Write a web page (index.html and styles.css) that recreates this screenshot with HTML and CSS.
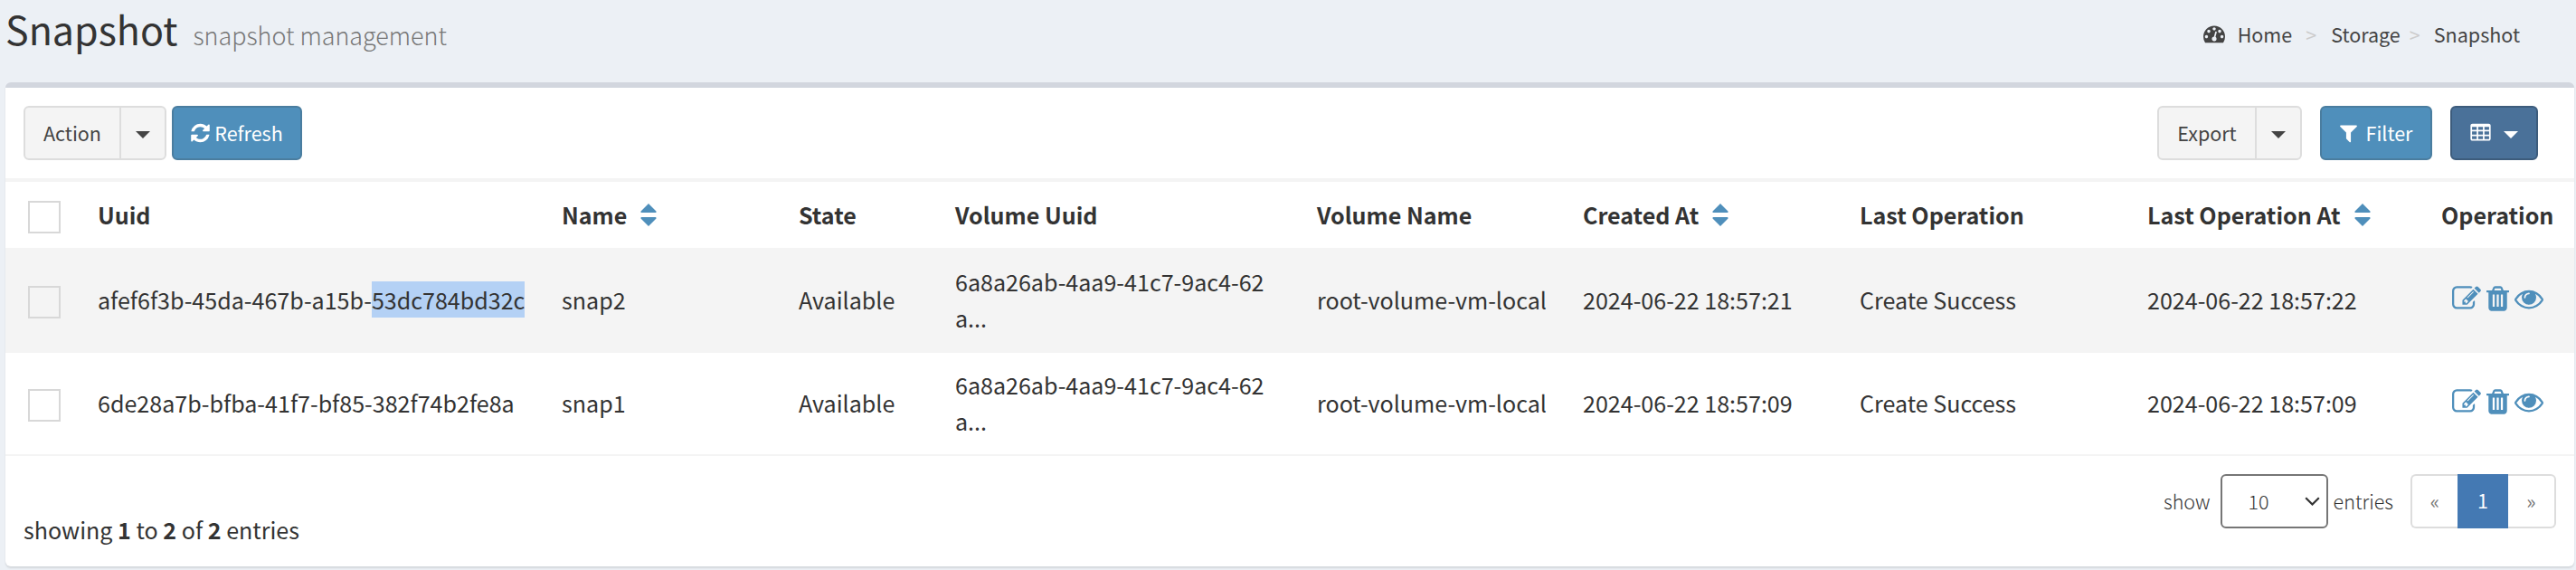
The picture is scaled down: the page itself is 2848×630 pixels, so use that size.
FILE: index.html
```html
<!DOCTYPE html>
<html lang="en">
<head>
<meta charset="utf-8">
<title>Snapshot</title>
<link rel="stylesheet" href="styles.css">
</head>
<body>
<svg class="sprite" aria-hidden="true">
  <symbol id="i-edit" viewBox="0 0 1792 1792"><path d="M888 1184l116-116-152-152-116 116v56h96v96h56zm440-720q-16-16-33 1l-350 350q-17 17-1 33t33-1l350-350q17-17 1-33zm80 594v190q0 119-84.500 203.500t-203.500 84.500h-832q-119 0-203.500-84.500t-84.500-203.500v-832q0-119 84.500-203.500t203.500-84.500h832q63 0 117 25 15 7 18 23 3 17-9 29l-49 49q-14 14-32 8-23-6-45-6h-832q-66 0-113 47t-47 113v832q0 66 47 113t113 47h832q66 0 113-47t47-113v-126q0-13 9-22l64-64q15-15 35-7t20 29zm-96-738l288 288-672 672h-288v-288zm444 132l-92 92-288-288 92-92q28-28 68-28t68 28l152 152q28 28 28 68t-28 68z"/></symbol>
  <symbol id="i-trash" viewBox="192 0 1408 1792"><path d="M704 1376v-704q0-14-9-23t-23-9h-64q-14 0-23 9t-9 23v704q0 14 9 23t23 9h64q14 0 23-9t9-23zm256 0v-704q0-14-9-23t-23-9h-64q-14 0-23 9t-9 23v704q0 14 9 23t23 9h64q14 0 23-9t9-23zm256 0v-704q0-14-9-23t-23-9h-64q-14 0-23 9t-9 23v704q0 14 9 23t23 9h64q14 0 23-9t9-23zm-544-992h448l-48-117q-7-9-17-11h-317q-10 2-17 11zm928 32v64q0 14-9 23t-23 9h-96v948q0 83-47 143.500t-113 60.500h-832q-66 0-113-58.500t-47-141.500v-952h-96q-14 0-23-9t-9-23v-64q0-14 9-23t23-9h309l70-167q15-37 54-63t79-26h320q40 0 79 26t54 63l70 167h309q14 0 23 9t9 23z"/></symbol>
  <symbol id="i-eye" viewBox="0 0 1792 1792"><path d="M1664 960q-152-236-381-353 61 104 61 225 0 185-131.500 316.500t-316.500 131.500-316.500-131.500-131.500-316.500q0-121 61-225-229 117-381 353 133 205 333.500 326.500t434.500 121.500 434.500-121.500 333.500-326.500zm-720-384q0-20-14-34t-34-14q-125 0-214.500 89.500t-89.500 214.500q0 20 14 34t34 14 34-14 14-34q0-86 61-147t147-61q20 0 34-14t14-34zm848 384q0 34-20 69-140 230-376.500 368.500t-499.500 138.500-499.500-139-376.500-368q-20-35-20-69t20-69q140-229 376.500-368t499.500-139 499.500 139 376.500 368q20 35 20 69z"/></symbol>
  <symbol id="i-refresh" viewBox="128 0 1536 1792"><path d="M1639 1056q0 5-1 7-64 268-268 434.500t-478 166.500q-146 0-282.500-55t-243.500-157l-129 129q-19 19-45 19t-45-19-19-45v-448q0-26 19-45t45-19h448q26 0 45 19t19 45-19 45l-137 137q71 66 161 102t187 36q134 0 250-65t186-179q11-17 53-117 8-23 30-23h192q13 0 22.500 9.500t9.500 22.500zm25-800v448q0 26-19 45t-45 19h-448q-26 0-45-19t-19-45 19-45l138-138q-148-137-349-137-134 0-250 65t-186 179q-11 17-53 117-8 23-30 23h-199q-13 0-22.500-9.500t-9.500-22.500v-7q65-268 270-434.500t480-166.500q146 0 284 55.500t245 156.500l130-129q19-19 45-19t45 19 19 45z"/></symbol>
  <symbol id="i-filter" viewBox="192 0 1408 1792"><path d="M1595 295q17 41-14 70l-493 493v742q0 42-39 59-13 5-25 5-27 0-45-19l-256-256q-19-19-19-45v-486l-493-493q-31-29-14-70 17-39 59-39h1280q42 0 59 39z"/></symbol>
  <symbol id="i-table" viewBox="64 0 1664 1792"><path fill-rule="evenodd" d="M224 128h1344q66 0 113 47t47 113v1088q0 66-47 113t-113 47h-1344q-66 0-113-47t-47-113v-1088q0-66 47-113t113-47zM192 384v256h384v-256zM704 384v256h384v-256zM1216 384v256h384v-256zM192 768v256h384v-256zM704 768v256h384v-256zM1216 768v256h384v-256zM192 1152v256h384v-256zM704 1152v256h384v-256zM1216 1152v256h384v-256z"/></symbol>
  <symbol id="i-dash" viewBox="0 0 1792 1792"><path d="M384 1152q0-53-37.500-90.500t-90.500-37.500-90.500 37.500-37.500 90.500 37.500 90.500 90.500 37.500 90.500-37.500 37.500-90.500zm192-448q0-53-37.500-90.500t-90.500-37.500-90.500 37.500-37.500 90.500 37.500 90.500 90.500 37.500 90.500-37.500 37.500-90.500zm428 481l101-382q6-26-7.500-48.500t-38.500-29.500-48 6.500-30 39.500l-101 382q-60 5-107 43.500t-63 98.500q-20 77 20 146t117 89 146-20 89-117q16-60-6-117t-72-91zm660-33q0-53-37.500-90.500t-90.500-37.500-90.500 37.500-37.500 90.500 37.500 90.500 90.500 37.500 90.500-37.500 37.500-90.500zm-640-640q0-53-37.500-90.500t-90.500-37.500-90.500 37.500-37.500 90.500 37.500 90.500 90.500 37.500 90.500-37.500 37.500-90.500zm448 192q0-53-37.500-90.500t-90.500-37.500-90.500 37.500-37.500 90.500 37.500 90.500 90.500 37.500 90.500-37.500 37.500-90.500zm320 448q0 261-141 483-19 29-54 29h-1402q-35 0-54-29-141-221-141-483 0-182 71-348t191-286 286-191 348-71 348 71 286 191 191 286 71 348z"/></symbol>
  <symbol id="i-sort" viewBox="0 0 18 25"><path d="M9 0l8.500 8.500q.5 1.500-.8 1.500H1.300Q0 10 .5 8.500zM9 25L.5 16.500Q0 15 1.300 15h15.400q1.300 0 .8 1.500z"/></symbol>
  <symbol id="i-caret" viewBox="0 0 16 8"><path d="M0 0h16l-8 8z"/></symbol>
</svg>

<header class="page-header">
  <h1 class="page-title">Snapshot<small class="page-sub">snapshot management</small></h1>
  <nav class="crumbs">
    <svg class="crumb-icon"><use href="#i-dash"/></svg>
    <a class="crumb">Home</a><span class="crumb-sep">&gt;</span>
    <a class="crumb">Storage</a><span class="crumb-sep crumb-sep-last">&gt;</span>
    <a class="crumb">Snapshot</a>
  </nav>
</header>

<main class="box">
  <div class="toolbar">
    <div class="btn-group action-group">
      <button class="btn btn-default btn-text">Action</button>
      <button class="btn btn-default btn-caret"><svg class="caret"><use href="#i-caret"/></svg></button>
    </div>
    <button class="btn btn-info btn-refresh"><svg class="icon-refresh"><use href="#i-refresh"/></svg>Refresh</button>
    <div class="toolbar-right">
      <div class="btn-group export-group">
        <button class="btn btn-default btn-text">Export</button>
        <button class="btn btn-default btn-caret"><svg class="caret"><use href="#i-caret"/></svg></button>
      </div>
      <button class="btn btn-info btn-filter"><svg class="icon-filter"><use href="#i-filter"/></svg>Filter</button>
      <button class="btn btn-columns"><svg class="icon-table"><use href="#i-table"/></svg><svg class="caret"><use href="#i-caret"/></svg></button>
    </div>
  </div>

  <table class="grid">
    <colgroup><col class="c-check"><col class="c-uuid"><col class="c-name"><col class="c-state"><col class="c-vuuid"><col class="c-vname"><col class="c-created"><col class="c-op"><col class="c-opat"><col class="c-actions"></colgroup>
    <thead>
      <tr>
        <th><span class="check"></span></th>
        <th>Uuid</th>
        <th>Name<svg class="sort"><use href="#i-sort"/></svg></th>
        <th>State</th>
        <th>Volume Uuid</th>
        <th>Volume Name</th>
        <th>Created At<svg class="sort"><use href="#i-sort"/></svg></th>
        <th>Last Operation</th>
        <th>Last Operation At<svg class="sort"><use href="#i-sort"/></svg></th>
        <th>Operation</th>
      </tr>
    </thead>
    <tbody>
      <tr class="striped">
        <td><span class="check"></span></td>
        <td>afef6f3b-45da-467b-a15b-<span class="selected">53dc784bd32c</span></td>
        <td>snap2</td>
        <td>Available</td>
        <td>6a8a26ab-4aa9-41c7-9ac4-62<br>a...</td>
        <td>root-volume-vm-local</td>
        <td>2024-06-22 18:57:21</td>
        <td>Create Success</td>
        <td>2024-06-22 18:57:22</td>
        <td><div class="ops"><svg class="op"><use href="#i-edit"/></svg><svg class="op op-trash"><use href="#i-trash"/></svg><svg class="op"><use href="#i-eye"/></svg></div></td>
      </tr>
      <tr>
        <td><span class="check"></span></td>
        <td>6de28a7b-bfba-41f7-bf85-382f74b2fe8a</td>
        <td>snap1</td>
        <td>Available</td>
        <td>6a8a26ab-4aa9-41c7-9ac4-62<br>a...</td>
        <td>root-volume-vm-local</td>
        <td>2024-06-22 18:57:09</td>
        <td>Create Success</td>
        <td>2024-06-22 18:57:09</td>
        <td><div class="ops"><svg class="op"><use href="#i-edit"/></svg><svg class="op op-trash"><use href="#i-trash"/></svg><svg class="op"><use href="#i-eye"/></svg></div></td>
      </tr>
    </tbody>
  </table>

  <footer class="box-footer">
    <div class="summary">showing <b>1</b> to <b>2</b> of <b>2</b> entries</div>
    <div class="pager">
      <span class="pager-label">show</span>
      <div class="select">10<svg class="chevron" viewBox="0 0 17 10"><path d="M1.200 1.200l7.300 7.300 7.300-7.300"/></svg></div>
      <span class="pager-label">entries</span>
      <div class="pages"><a class="page page-prev">«</a><a class="page page-active">1</a><a class="page page-next">»</a></div>
    </div>
  </footer>
</main>
</body>
</html>
```

FILE: styles.css
```css
* { box-sizing: border-box; }
body {
  margin: 0;
  height: 630px;
  padding: 0 2px 0 6px;
  overflow: hidden;
  background: #ecf0f5;
  color: #333;
  font-family: "Noto Sans CJK SC", "Noto Sans", sans-serif;
  font-size: 25.07px;
  line-height: 40px;
}
svg { display: block; fill: currentColor; flex: none; }
.sprite { position: absolute; width: 0; height: 0; }

.page-header { display: flex; justify-content: space-between; height: 91px; }
.page-title {
  margin: 0;
  padding-top: 7px;
  font-size: 43px;
  font-weight: 400;
  line-height: 48px;
}
.page-sub { margin-left: 17px; font-size: 26.9px; font-weight: 300; color: #777; }
.crumbs {
  display: flex;
  align-items: center;
  height: 40px;
  margin: 18px 60px 0 0;
  font-size: 21.5px;
  color: #444;
}
.crumb-icon { width: 24px; height: 24px; margin: 0 14px 2px 0; }
.crumb-sep { width: 43px; padding-left: 15px; color: #ccc; }
.crumb-sep-last { width: 37px; padding-left: 10px; }

.box {
  height: 535px;
  background: #fff;
  border-top: 6px solid #d2d6de;
  border-radius: 6px;
  box-shadow: 0 2px 2px rgba(0, 0, 0, .1);
}
.toolbar {
  display: flex;
  height: 104px;
  padding: 20px 40px 0 20px;
  border-bottom: 4px solid #f4f4f4;
}
.toolbar-right { display: flex; gap: 20px; margin-left: auto; }
.btn-group { display: flex; margin-right: 6px; }
.export-group { margin-right: 0; }
.btn {
  display: flex;
  align-items: center;
  justify-content: center;
  height: 60px;
  padding: 0 0 1px;
  border: 2px solid #ddd;
  border-radius: 6px;
  font: 400 21.5px/32px "Noto Sans CJK SC", "Noto Sans", sans-serif;
  color: #444;
}
.btn-default { background: #f4f4f4; }
.btn-text { width: 108px; border-radius: 6px 0 0 6px; }
.btn-caret { width: 52px; margin-left: -2px; border-radius: 0 6px 6px 0; }
.export-group .btn-text { width: 110px; }
.caret { width: 16px; height: 8px; margin-top: 4px; }
.btn-info { background: #4f8fbb; border-color: #4a7d9f; color: #fff; }
.btn-refresh { width: 144px; gap: 5px; }
.icon-refresh { width: 21px; height: 24px; }
.btn-filter { width: 124px; gap: 10px; }
.icon-filter { width: 19px; height: 24px; }
.btn-columns { width: 97px; gap: 14px; background: #4a7199; border-color: #3d5c7c; color: #fff; }
.icon-table { width: 23px; height: 24px; }

.grid { width: 2840px; table-layout: fixed; border-collapse: separate; border-spacing: 0; }
.c-check { width: 86px; }
.c-uuid { width: 513px; }
.c-name { width: 262px; }
.c-state { width: 173px; }
.c-vuuid { width: 400px; }
.c-vname { width: 294px; }
.c-created { width: 306px; }
.c-op { width: 318px; }
.c-opat { width: 325px; }
.c-actions { width: 163px; }
.grid th, .grid td { padding: 0 0 0 16px; text-align: left; vertical-align: middle; white-space: nowrap; }
.grid th { height: 75px; padding-bottom: 2px; border-bottom: 2px solid #f4f4f4; font-weight: 700; }
.grid td { height: 114px; padding-top: 15px; padding-bottom: 17px; border-bottom: 2px solid #f4f4f4; }
.grid th:first-child, .grid td:first-child { padding-left: 25px; }
.grid th:first-child { padding-top: 5px; padding-bottom: 0; }
.grid td:first-child { padding-top: 18px; padding-bottom: 14px; }
.striped { background: #f4f4f4; }
.check { display: block; width: 36px; height: 36px; border: 2px solid #d8d8d8; }
.sort { display: inline-block; width: 18px; height: 25px; margin-left: 15px; vertical-align: -2px; color: #4f8fbb; }
.selected { display: inline-block; height: 40px; background: #b4d1f5; }
.ops { display: flex; gap: 6px; padding: 0 0 2px 12px; color: #4f8fbb; }
.op { width: 32px; height: 32px; }
.op-trash { width: 25px; }

.box-footer { display: flex; justify-content: space-between; padding: 20px 20px 0; }
.summary { padding-top: 41px; }
.summary b { font-weight: 700; }
.pager { display: flex; align-items: center; height: 60px; font-size: 21.5px; font-weight: 300; }
.select {
  display: flex;
  align-items: center;
  justify-content: space-between;
  width: 119px;
  height: 60px;
  margin: 0 6px 0 11px;
  padding: 0 7px 1px 29px;
  border: 2px solid #767676;
  border-radius: 6px;
}
.chevron { width: 17px; height: 10px; fill: none; stroke: #333; stroke-width: 2.2; }
.pages { display: flex; margin-left: 19px; }
.page {
  display: flex;
  align-items: center;
  justify-content: center;
  width: 53px;
  height: 60px;
  border: 2px solid #ddd;
  font-weight: 400;
  color: #777;
}
.page-prev { width: 52px; border-right: 0; border-radius: 6px 0 0 6px; }
.page-next { border-left: 0; border-radius: 0 6px 6px 0; }
.page-active { width: 56px; padding-bottom: 2px; background: #4479b3; border-color: #4479b3; color: #fff; }
```
